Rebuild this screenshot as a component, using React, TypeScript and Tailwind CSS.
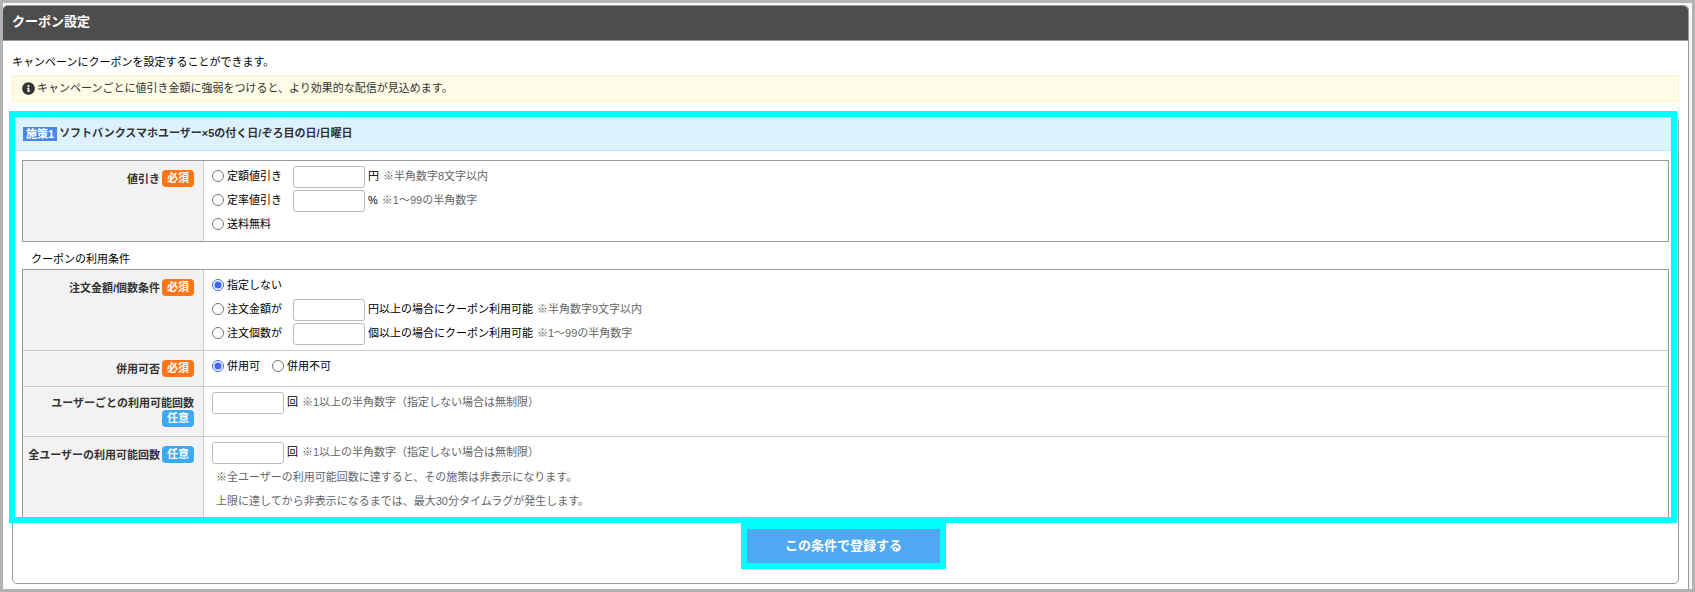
import React, { useState } from 'react';
import { FaInfoCircle } from 'react-icons/fa';

const textBox = "h-[22px] w-[72px] rounded-[3px] border border-[#bbb] bg-white px-1 text-[11px]";
const radio = "m-0 h-3 w-3 shrink-0 accent-[#3f66ff]";

function Row({ title, required, first, children }: any) {
  const line = first ? "" : "border-t border-t-[#ccc]";
  return (
    <tr>
      <th scope="row" className={`w-[181px] border-r border-r-[#ccc] bg-[#f2f2f2] py-[9px] pr-[9px] align-top font-bold text-[#333] ${line}`}>
        <div className="flex flex-wrap items-center justify-end gap-x-0.5 leading-[14px]">
          <span>{title}</span>
          <span className={`h-[17px] rounded-[4px] px-[5px] leading-[17px] text-white ${required ? "bg-[#ff7416]" : "bg-[#3ea9f0]"}`}>
            {required ? "必須" : "任意"}
          </span>
        </div>
      </th>
      <td className={`bg-white py-1 pr-2 pl-2 align-top ${line}`}>{children}</td>
    </tr>
  );
}

function Choice({ name, value, current, onPick, label, unit, hint }: any) {
  return (
    <div className="flex h-6 items-center">
      <label className={`flex items-center gap-[3px] pb-0.5 ${unit ? "w-[81px]" : ""}`}>
        <input type="radio" name={name} value={value} checked={current === value} onChange={() => onPick(value)} className={radio} />
        {label}
      </label>
      {unit && <input type="text" aria-label={label} className={textBox} />}
      {unit && <span className="ml-[3px] pb-0.5">{unit}</span>}
      {hint && <span className="ml-1 pb-0.5 text-[#666]">{hint}</span>}
    </div>
  );
}

function CountField({ label }: { label: string }) {
  return (
    <div className="flex h-6 items-center">
      <input type="text" aria-label={label} className={textBox} />
      <span className="ml-[3px] pb-0.5">回</span>
      <span className="ml-1 pb-0.5 text-[#666]">※1以上の半角数字（指定しない場合は無制限）</span>
    </div>
  );
}

export default function App() {
  const [discount, setDiscount] = useState('');
  const [condition, setCondition] = useState('none');
  const [combine, setCombine] = useState('yes');

  function handleSubmit(e: any) {
    e.preventDefault();
  }

  return (
    <div className="flex min-h-screen flex-col border-[3px] border-[#b3b3b3] bg-[#f7f7f7] pt-0.5 pr-[3px] font-['Liberation_Sans','Noto_Sans_CJK_JP',sans-serif] text-[11px] text-black">
      <div className="flex-1 rounded-t-[5px] border-r border-[#999] bg-white">
        <h1 className="h-9 rounded-t-[5px] border-y border-[#999] bg-[#4d4d4d] pl-[9px] text-[13px] leading-[32px] font-bold text-white">
          クーポン設定
        </h1>

        <div className="px-[9px] pt-[11px] pb-[5px]">
          <p className="leading-5">キャンペーンにクーポンを設定することができます。</p>
          <p className="mt-[3px] flex h-[27px] items-center gap-0.5 border border-[#fcf3c5] bg-[#fefbe6] pl-[9px] text-[#333]">
            <FaInfoCircle className="h-[13px] w-[13px] shrink-0" />
            キャンペーンごとに値引き金額に強弱をつけると、より効果的な配信が見込めます。
          </p>

          <form onSubmit={handleSubmit} className="mt-[14px] rounded-[5px] border border-[#999] pb-[14px]">
            <section className="relative">
              <h2 className="flex h-[34px] items-center gap-0.5 border-b border-[#b5e6fb] bg-[#dcf2fe] pl-[10px] font-bold text-[#333]">
                <span className="h-[14px] bg-[#4a86e8] px-[3px] leading-[14px] text-white">施策1</span>
                ソフトバンクスマホユーザー×5の付く日/ぞろ目の日/日曜日
              </h2>

              <div className="px-[9px] pt-[9px]">
                <table className="w-full border-separate border-spacing-0 border border-[#999]">
                  <tbody>
                    <Row title="値引き" required first>
                      <Choice name="discount" value="fixed" current={discount} onPick={setDiscount} label="定額値引き" unit="円" hint="※半角数字8文字以内" />
                      <Choice name="discount" value="rate" current={discount} onPick={setDiscount} label="定率値引き" unit="%" hint="※1～99の半角数字" />
                      <Choice name="discount" value="shipping" current={discount} onPick={setDiscount} label="送料無料" />
                    </Row>
                  </tbody>
                </table>

                <h3 className="pt-2 pl-[9px] leading-[19px]">クーポンの利用条件</h3>

                <table className="w-full border-separate border-spacing-0 border border-[#999]">
                  <tbody>
                    <Row title="注文金額/個数条件" required first>
                      <Choice name="condition" value="none" current={condition} onPick={setCondition} label="指定しない" />
                      <Choice name="condition" value="amount" current={condition} onPick={setCondition} label="注文金額が" unit="円以上の場合にクーポン利用可能" hint="※半角数字9文字以内" />
                      <Choice name="condition" value="count" current={condition} onPick={setCondition} label="注文個数が" unit="個以上の場合にクーポン利用可能" hint="※1～99の半角数字" />
                    </Row>
                    <Row title="併用可否" required>
                      <div className="flex gap-3">
                        <Choice name="combine" value="yes" current={combine} onPick={setCombine} label="併用可" />
                        <Choice name="combine" value="no" current={combine} onPick={setCombine} label="併用不可" />
                      </div>
                    </Row>
                    <Row title="ユーザーごとの利用可能回数">
                      <CountField label="ユーザーごとの利用可能回数" />
                    </Row>
                    <Row title="全ユーザーの利用可能回数">
                      <CountField label="全ユーザーの利用可能回数" />
                      <p className="pl-1 leading-6 text-[#666]">
                        ※全ユーザーの利用可能回数に達すると、その施策は非表示になります。
                        <br />
                        上限に達してから非表示になるまでは、最大30分タイムラグが発生します。
                      </p>
                    </Row>
                  </tbody>
                </table>
              </div>

              {/* highlight frame */}
              <div className="pointer-events-none absolute -top-1.5 right-px -bottom-[5px] -left-1 border-[6px] border-[#00ffff]" />
            </section>

            <div className="mt-[5px] flex justify-center pr-1">
              <button type="submit" className="h-[46px] w-[205px] cursor-pointer border-[6px] border-[#00ffff] bg-[#4fa9f2] text-[13px] font-bold text-white">
                この条件で登録する
              </button>
            </div>
          </form>
        </div>
      </div>
    </div>
  );
}
